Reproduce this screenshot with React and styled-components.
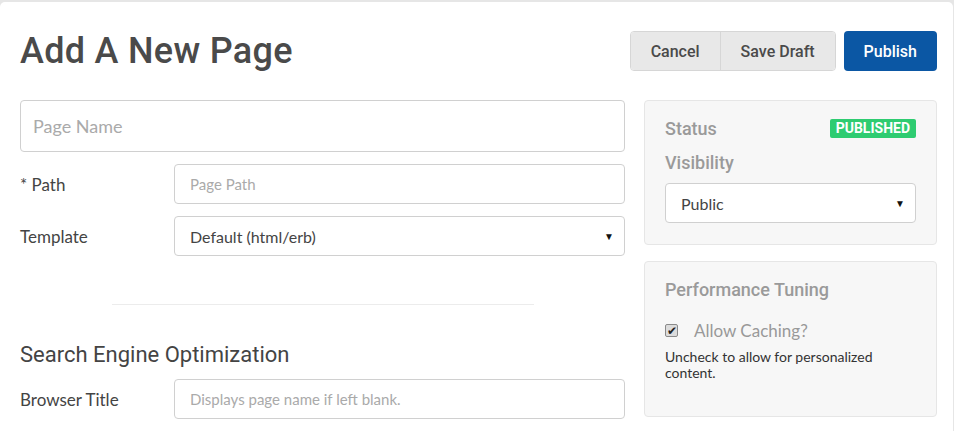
import React from "react"
import styled, { createGlobalStyle } from "styled-components"

const GlobalStyle = createGlobalStyle`
  html, body {
    margin: 0;
    padding: 0;
    background: #e6e6e6;
  }
  body {
    font-family: Lato, "Liberation Sans", sans-serif;
    color: #333;
  }
`;

const Page = styled.div`
  padding: 2px 1px 0 0;
  height: 431px;
  box-sizing: border-box;
  overflow: hidden;
`;

const Card = styled.div`
  background: #fff;
  border-radius: 5px 5px 0 0;
  height: 100%;
  padding: 26px 16px 0 20px;
  box-sizing: border-box;
`;

// Header: title on the left, actions on the right
const Header = styled.div`
  display: flex;
  align-items: center;
  justify-content: space-between;
  height: 46px;
  margin-bottom: 26px;
`;

const Title = styled.h1`
  margin: 0;
  font-family: Roboto, "Liberation Sans", sans-serif;
  font-weight: 500;
  font-size: 36px;
  color: #4a4a4a;
  letter-spacing: 0.3px;
`;

const Actions = styled.div`
  display: flex;
  gap: 8px;
  align-items: center;
`;

const BtnGroup = styled.div`
  display: flex;
  border: 1px solid #d6d6d6;
  border-radius: 4px;
  overflow: hidden;
`;

const Button = styled.button`
  font-family: Roboto, "Liberation Sans", sans-serif;
  font-weight: 500;
  font-size: 16px;
  height: ${({grouped}) => grouped ? 38 : 40}px;
  padding: 0 ${({pad}) => pad}px;
  border: none;
  background: ${({primary}) => primary ? "#0b57a4" : "#e8e8e8"};
  color: ${({primary}) => primary ? "#fff" : "#4a4a4a"};
  border-radius: ${({grouped}) => grouped ? 0 : 4}px;
  & + & {
    border-left: 1px solid #d6d6d6;
  }
`;

const Body = styled.div`
  display: grid;
  grid-template-columns: 605px 293px;
  column-gap: 19px;
`;

const Main = styled.div`
  display: flex;
  flex-direction: column;
`;

const Side = styled.div`
  display: flex;
  flex-direction: column;
  gap: 16px;
`;

const BigInput = styled.input`
  height: 52px;
  box-sizing: border-box;
  border: 1px solid #d0d0d0;
  border-radius: 4px;
  padding: 0 12px;
  font-family: Lato, "Liberation Sans", sans-serif;
  font-size: 18px;
  margin-bottom: 12px;
  &::placeholder { color: #aaa; }
`;

const Row = styled.div`
  display: grid;
  grid-template-columns: 154px 1fr;
  align-items: center;
  margin-bottom: 12px;
`;

const Label = styled.label`
  font-size: 17px;
  color: #444;
`;

const Input = styled.input`
  height: 40px;
  box-sizing: border-box;
  border: 1px solid #d0d0d0;
  border-radius: 4px;
  padding: 0 15px;
  font-family: Lato, "Liberation Sans", sans-serif;
  font-size: 15px;
  background: #fff;
  &::placeholder { color: #aaa; }
`;

const SelectBox = styled.div`
  height: 40px;
  box-sizing: border-box;
  border: 1px solid #d0d0d0;
  border-radius: 4px;
  padding: 0 10px 0 15px;
  margin-top: ${({mt}) => mt || 0}px;
  display: flex;
  align-items: center;
  justify-content: space-between;
  font-size: 16px;
  color: #444;
  background: #fff;
`;

const Caret = styled.span`
  font-size: 10px;
  color: #111;
`;

const Divider = styled.hr`
  width: 422px;
  margin: 36px 0 0 92px;
  border: none;
  border-top: 1px solid #ececec;
`;

const SectionTitle = styled.h2`
  font-family: Roboto, "Liberation Sans", sans-serif;
  font-weight: 400;
  font-size: 22px;
  color: #444;
  margin: 37px 0 12px;
`;

const Panel = styled.div`
  background: #f7f7f7;
  border: 1px solid #e6e6e6;
  border-radius: 4px;
  padding: 17px 20px 0;
  height: ${({h}) => h}px;
  box-sizing: border-box;
`;

const PanelHead = styled.div`
  display: flex;
  justify-content: space-between;
  align-items: center;
  margin-bottom: ${({mb}) => mb || 0}px;
`;

const PanelTitle = styled.div`
  font-family: Roboto, "Liberation Sans", sans-serif;
  font-weight: 500;
  font-size: 18px;
  color: #9a9a9a;
`;

const Badge = styled.span`
  background: #2ecc71;
  color: #fff;
  font-family: Roboto, "Liberation Sans", sans-serif;
  font-weight: 700;
  font-size: 14px;
  padding: 1px 6px 2px;
  border-radius: 2px;
  line-height: 16px;
`;

const CheckRow = styled.label`
  display: flex;
  align-items: center;
  gap: 16px;
  font-size: 17px;
  color: #999;
  margin: 20px 0 8px;
`;

// Greyed-out checkbox as rendered by the original browser
const Check = styled.span`
  width: 11px;
  height: 11px;
  border: 1px solid #8a8a8a;
  border-radius: 2px;
  background: #dcdcdc;
  display: flex;
  align-items: center;
  justify-content: center;
  font-size: 12px;
  line-height: 1;
  color: #222;
`;

const Help = styled.p`
  margin: 0;
  font-size: 14px;
  line-height: 16px;
  color: #333;
  width: 230px;
`;

export default function App() {
  return (
    <Page>
      <GlobalStyle />
      <Card>
        <Header>
          <Title>Add A New Page</Title>
          <Actions>
            <BtnGroup>
              <Button grouped pad={20}>Cancel</Button>
              <Button grouped pad={20}>Save Draft</Button>
            </BtnGroup>
            <Button primary pad={20}>Publish</Button>
          </Actions>
        </Header>
        <Body>
          <Main>
            <BigInput placeholder="Page Name" />
            <Row>
              <Label>* Path</Label>
              <Input placeholder="Page Path" />
            </Row>
            <Row>
              <Label>Template</Label>
              <SelectBox>
                Default (html/erb)
                <Caret>▼</Caret>
              </SelectBox>
            </Row>
            <Divider />
            <SectionTitle>Search Engine Optimization</SectionTitle>
            <Row>
              <Label>Browser Title</Label>
              <Input placeholder="Displays page name if left blank." />
            </Row>
          </Main>
          <Side>
            <Panel h={145}>
              <PanelHead mb={13}>
                <PanelTitle>Status</PanelTitle>
                <Badge>PUBLISHED</Badge>
              </PanelHead>
              <PanelTitle>Visibility</PanelTitle>
              <SelectBox mt={10}>
                Public
                <Caret>▼</Caret>
              </SelectBox>
            </Panel>
            <Panel h={156}>
              <PanelTitle>Performance Tuning</PanelTitle>
              <CheckRow>
                <Check>✔</Check>
                Allow Caching?
              </CheckRow>
              <Help>Uncheck to allow for personalized content.</Help>
            </Panel>
          </Side>
        </Body>
      </Card>
    </Page>
  );
}
